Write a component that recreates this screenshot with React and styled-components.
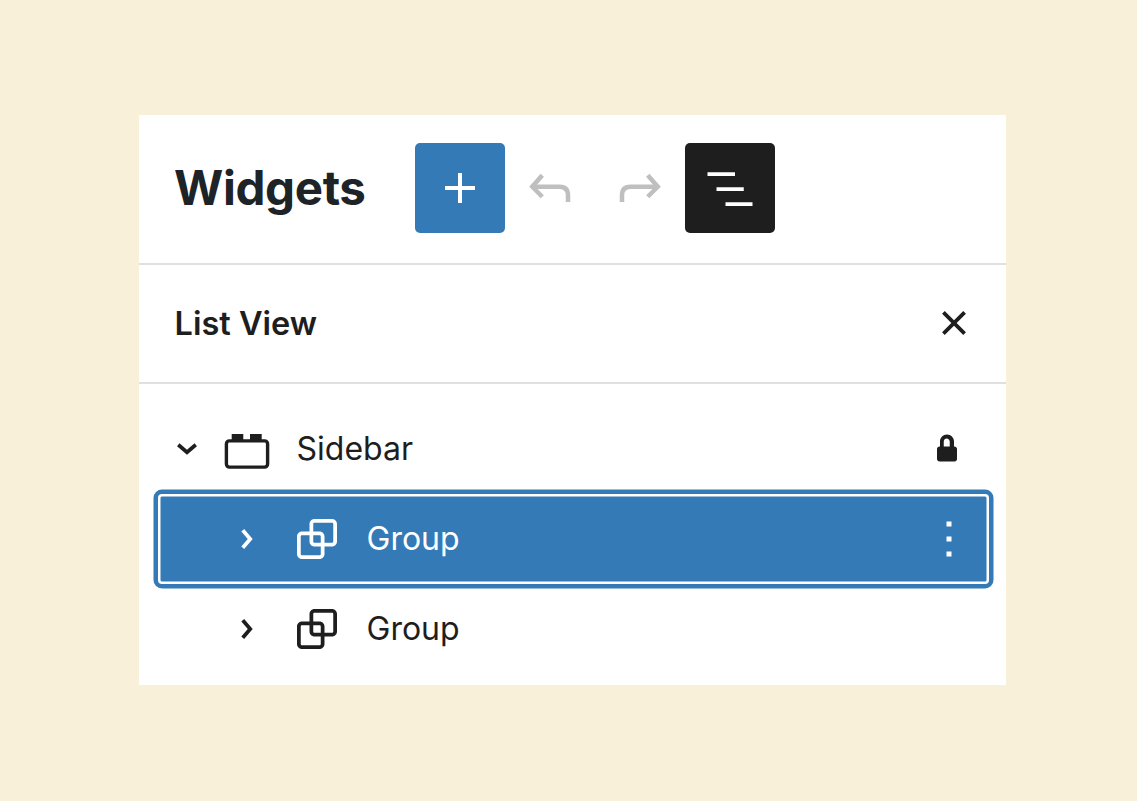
import { createGlobalStyle, styled } from "styled-components";

const GlobalStyle = createGlobalStyle`
  html, body {
    margin: 0;
    padding: 0;
    background: #f8f0d9;
  }
`;

const Page = styled.div`
  min-height: 100vh;
  box-sizing: border-box;
  padding: 115px 131px 0 139px;
  font-family: Inter, "Liberation Sans", sans-serif;
  color: #1e1e1e;
`;

const Panel = styled.div`
  background: #fff;
  height: 570px;
`;

const Header = styled.div`
  display: flex;
  align-items: flex-start;
  height: 120px;
  padding: 28px 0 0 35px;
  border-bottom: 2px solid #e0e0e0;
`;

const Title = styled.h1`
  margin: 0 50px 0 0;
  width: 191px;
  font-size: 47.5px;
  line-height: 90px;
  letter-spacing: -0.35px;
  font-weight: 650;
  color: #1d2327;
  white-space: nowrap;
`;

const ToolButton = styled.div`
  width: 90px;
  height: 90px;
  border-radius: 5px;
  display: flex;
  align-items: center;
  justify-content: center;
  background: ${(p) => p.$bg || "transparent"};
  color: ${(p) => p.$color || "#fff"};
`;

const Icon = styled.svg`
  width: 60px;
  height: 60px;
  display: block;
  flex: none;
  fill: currentColor;
`;

const StrokeIcon = styled(Icon)`
  fill: none;
  stroke: currentColor;
`;

const ListHeader = styled.div`
  display: flex;
  align-items: center;
  justify-content: space-between;
  height: 116px;
  padding: 0 22px 1px 35.5px;
  border-bottom: 2px solid #e0e0e0;
`;

const ListTitle = styled.h2`
  margin: 0;
  font-size: 32.5px;
  font-weight: 600;
`;

const Rows = styled.div`
  padding: 20px 17px 0 19px;
`;

const Row = styled.div`
  display: flex;
  align-items: center;
  height: 90px;
  padding-left: ${(p) => p.$indent}px;
  border-radius: 4px;
  color: ${(p) => (p.$selected ? "#fff" : "#1e1e1e")};
  background: ${(p) => (p.$selected ? "#337ab7" : "transparent")};
  box-shadow: ${(p) =>
    p.$selected ? "inset 0 0 0 2.5px #fff, 0 0 0 4.5px #337ab7" : "none"};
`;

const Chevron = styled(Icon)`
  margin-left: ${(p) => p.$shift || 0}px;
`;

const BlockIcon = styled.div`
  margin-left: ${(p) => p.$gap || 0}px;
  flex: none;
`;

const Label = styled.span`
  margin-left: 19.5px;
  padding-bottom: 2px;
  font-size: 32px;
  flex: 1;
`;

const Trailing = styled.div`
  margin-right: ${(p) => p.$right}px;
`;

const GROUP =
  "M18 4h-7c-1.1 0-2 .9-2 2v3H6c-1.1 0-2 .9-2 2v7c0 1.1.9 2 2 2h7c1.1 0 2-.9 2-2v-3h3c1.1 0 2-.9 2-2V6c0-1.1-.9-2-2-2zm-4.5 14c0 .3-.2.5-.5.5H6c-.3 0-.5-.2-.5-.5v-7c0-.3.2-.5.5-.5h3V13c0 1.1.9 2 2 2h2.5v3zm0-4.5H11c-.3 0-.5-.2-.5-.5v-2.5H13c.3 0 .5.2.5.5v2.5zm5-.5c0 .3-.2.5-.5.5h-3V11c0-1.1-.9-2-2-2h-2.5V6c0-.3.2-.5.5-.5h7c.3 0 .5.2.5.5v7z";

const ChevronRight = () => (
  <Icon viewBox="0 0 24 24">
    <path d="M10.8622 8.04053L14.2805 12.0286L10.8622 16.0167L9.72327 15.0405L12.3049 12.0286L9.72327 9.01672L10.8622 8.04053Z" />
  </Icon>
);

const GroupIcon = () => (
  <Icon viewBox="0 0 24 24">
    <path d={GROUP} />
  </Icon>
);

const GroupRow = ({ selected }) => (
  <Row $indent={59} $selected={selected}>
    <ChevronRight />
    <BlockIcon $gap={10}>
      <GroupIcon />
    </BlockIcon>
    <Label>Group</Label>
    {selected && (
      <Trailing $right={10}>
        <Icon viewBox="0 0 24 24">
          <path d="M13 19h-2v-2h2v2zm0-6h-2v-2h2v2zm0-6h-2V5h2v2z" />
        </Icon>
      </Trailing>
    )}
  </Row>
);

export default function App() {
  return (
    <Page>
      <GlobalStyle />
      <Panel>
        <Header>
          <Title>Widgets</Title>
          <ToolButton $bg="#337ab7">
            <Icon viewBox="0 0 24 24">
              <path d="M18 11.2h-5.2V6h-1.6v5.2H6v1.6h5.2V18h1.6v-5.2H18z" />
            </Icon>
          </ToolButton>
          <ToolButton $color="#bfbfbf">
            <StrokeIcon viewBox="0 0 24 24" strokeWidth="1.8">
              <path d="M19.2 17.6v-2.6c0-2.2-1.1-3.5-3.3-3.5H4.6" />
              <path d="M8.9 6.9L4.9 11.5l4 4" />
            </StrokeIcon>
          </ToolButton>
          <ToolButton $color="#bfbfbf">
            <StrokeIcon viewBox="0 0 24 24" strokeWidth="1.8">
              <path d="M4.8 17.6v-2.6c0-2.2 1.1-3.5 3.3-3.5h11" />
              <path d="M15.1 6.9l4 4.6-4 4" />
            </StrokeIcon>
          </ToolButton>
          <ToolButton $bg="#1e1e1e">
            <Icon viewBox="0 0 24 24">
              <path d="M3 6h11v1.5H3V6zm3.6 6H17.5v1.5H6.6V12zM10.2 18H21v1.5H10.2V18z" transform="translate(0 -0.3)" />
            </Icon>
          </ToolButton>
        </Header>
        <ListHeader>
          <ListTitle>List View</ListTitle>
          <Icon viewBox="0 0 24 24">
            <path d="M12 13.06l3.712 3.713 1.061-1.06L13.061 12l3.712-3.712-1.06-1.06L12 10.938 8.288 7.227l-1.061 1.06L10.939 12l-3.712 3.712 1.06 1.061L12 13.061z" />
          </Icon>
        </ListHeader>
        <Rows>
          <Row $indent={0}>
            <Chevron viewBox="0 0 24 24" $shift={-1}>
              <path d="M15.9899 10.8708L12.0018 14.2891L8.01367 10.8708L8.98986 9.73193L12.0018 12.3136L15.0137 9.73193L15.9899 10.8708Z" />
            </Chevron>
            <BlockIcon>
              <Icon viewBox="0 0 60 60">
                <rect x="14.7" y="15" width="11.6" height="6" />
                <rect x="33" y="15" width="11.7" height="6" />
                <rect x="9.4" y="21.9" width="41.2" height="26.2" rx="3" fill="none" stroke="currentColor" strokeWidth="3.4" />
              </Icon>
            </BlockIcon>
            <Label>Sidebar</Label>
            <Trailing $right={12}>
              <Icon viewBox="0 0 24 24">
                <path d="M15 11h-.2V9c0-1.5-1.2-2.8-2.8-2.8S9.2 7.5 9.2 9v2H9c-.5 0-1 .5-1 1v4c0 .6.5 1 1 1h6c.6 0 1-.4 1-1v-4c0-.5-.5-1-1-1zm-1.8 0h-2.5V9c0-.7.6-1.2 1.2-1.2s1.2.6 1.2 1.2v2z" />
              </Icon>
            </Trailing>
          </Row>
          <GroupRow selected />
          <GroupRow />
        </Rows>
      </Panel>
    </Page>
  );
}
